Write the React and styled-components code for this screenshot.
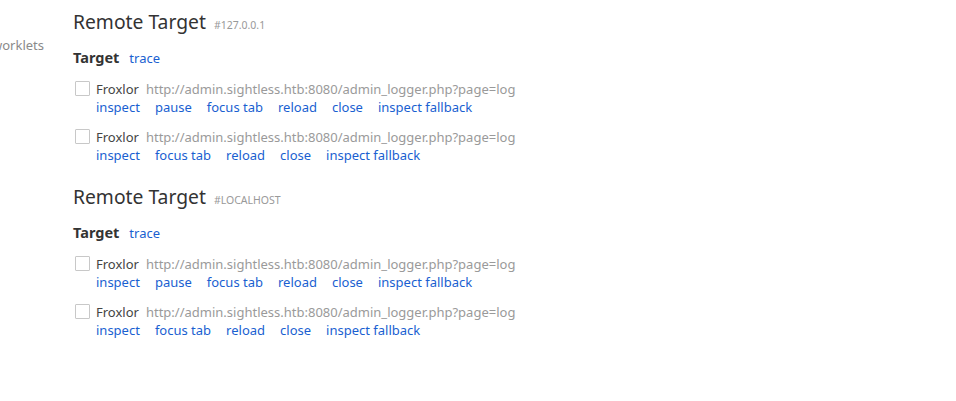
import React from "react";
import styled, { createGlobalStyle } from "styled-components";

const GlobalStyle = createGlobalStyle`
  html, body {
    margin: 0;
    padding: 0;
    background: #fff;
  }
  body {
    font-family: "Noto Sans", "Open Sans", sans-serif;
    font-size: 13px;
    color: #333;
  }
`;

const targets = [
  {
    serial: "#127.0.0.1",
    items: [
      { actions: ["inspect", "pause", "focus tab", "reload", "close", "inspect fallback"] },
      { actions: ["inspect", "focus tab", "reload", "close", "inspect fallback"] },
    ],
  },
  {
    serial: "#localhost",
    items: [
      { actions: ["inspect", "pause", "focus tab", "reload", "close", "inspect fallback"] },
      { actions: ["inspect", "focus tab", "reload", "close", "inspect fallback"] },
    ],
  },
];

function App() {
  return (
    <>
      <GlobalStyle />
      <Page>
        <Sidebar>
          <SideItem>worklets</SideItem>
        </Sidebar>
        <Main>
          {targets.map((t, i) => (
            <Section key={i}>
              <Header>
                <Title>Remote Target</Title>
                <Serial>{t.serial}</Serial>
              </Header>
              <TargetLine>
                <Label>Target</Label>
                <Link>trace</Link>
              </TargetLine>
              <List>
                {t.items.map((item, j) => (
                  <Row key={j}>
                    <Check />
                    <Info>
                      <NameLine>
                        <Name>Froxlor</Name>
                        <Url>http://admin.sightless.htb:8080/admin_logger.php?page=log</Url>
                      </NameLine>
                      <Actions>
                        {item.actions.map((a) => (
                          <Link key={a}>{a}</Link>
                        ))}
                      </Actions>
                    </Info>
                  </Row>
                ))}
              </List>
            </Section>
          ))}
        </Main>
      </Page>
    </>
  );
}

const Page = styled.div`
  display: flex;
  width: 956px;
  height: 401px;
  overflow: hidden;
`;

const Sidebar = styled.div`
  width: 73px;
  flex-shrink: 0;
  overflow: hidden;
  padding-top: 36px;
`;

const SideItem = styled.div`
  margin-left: -8px;
  line-height: 18px;
  color: #8a8a8a;
  white-space: nowrap;
`;

const Main = styled.div`
  padding-top: 8px;
  display: flex;
  flex-direction: column;
  gap: 19px;
`;

const Section = styled.div`
  display: flex;
  flex-direction: column;
`;

const Header = styled.div`
  display: flex;
  align-items: baseline;
  gap: 8px;
  height: 28px;
  margin-bottom: 12px;
`;

const Title = styled.h2`
  margin: 0;
  font-size: 19.3px;
  font-weight: 400;
  line-height: 28px;
  color: #333;
`;

const Serial = styled.span`
  font-size: 10.5px;
  color: #999;
  text-transform: uppercase;
`;

const TargetLine = styled.div`
  display: flex;
  align-items: baseline;
  gap: 10px;
  height: 19px;
  line-height: 18px;
  margin-bottom: 13px;
`;

const Label = styled.span`
  font-size: 14.5px;
  font-weight: 700;
  color: #333;
`;

const Link = styled.span`
  color: #1a5fd1;
  cursor: pointer;
  white-space: nowrap;
`;

const List = styled.div`
  display: flex;
  flex-direction: column;
  gap: 12px;
`;

const Row = styled.div`
  display: flex;
  align-items: flex-start;
  gap: 6px;
`;

const Check = styled.span`
  box-sizing: border-box;
  width: 15px;
  height: 15px;
  margin: 1px 0 0 2px;
  border: 1px solid #c8c8c8;
  border-radius: 1px;
  background: #fff;
`;

const Info = styled.div`
  display: flex;
  flex-direction: column;
  line-height: 18px;
`;

const NameLine = styled.div`
  display: flex;
  gap: 7px;
  white-space: nowrap;
`;

const Name = styled.span`
  color: #444;
`;

const Url = styled.span`
  color: #9a9a9a;
`;

const Actions = styled.div`
  display: flex;
  gap: 15px;
`;

export default App;
